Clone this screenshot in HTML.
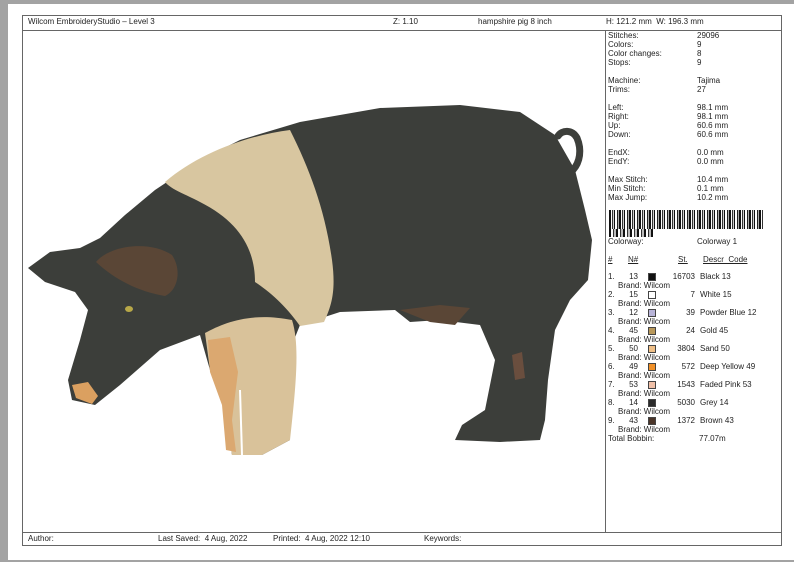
<!DOCTYPE html>
<html><head><meta charset="utf-8"><style>
*{margin:0;padding:0;box-sizing:border-box}
body{width:794px;height:562px;background:#a3a3a3;position:relative;overflow:hidden;font-family:"Liberation Sans",sans-serif;font-size:8px;color:#222}
#page{position:absolute;left:8px;top:4px;width:786px;height:556px;background:#fff}
.box{position:absolute;border:1px solid #777}
.t{position:absolute;white-space:nowrap;line-height:9px}
.sw{position:absolute;width:8px;height:8px;border:1px solid #444}
</style></head><body>
<div id="page"></div>
<div class="box" style="left:22px;top:15px;width:760px;height:531px;border-color:#666"></div>
<div class="box" style="left:22px;top:30px;width:760px;height:1px;border:0;border-top:1px solid #666"></div>
<div class="box" style="left:22px;top:532px;width:760px;height:1px;border:0;border-top:1px solid #666"></div>
<div class="box" style="left:605px;top:30px;width:1px;height:502px;border:0;border-left:1px solid #666"></div>

<div class="t" style="left:28px;top:17px">Wilcom EmbroideryStudio – Level 3</div>
<div class="t" style="left:393px;top:17px">Z: 1.10</div>
<div class="t" style="left:478px;top:17px">hampshire pig 8 inch</div>
<div class="t" style="left:606px;top:17px">H: 121.2 mm &nbsp;W: 196.3 mm</div>

<div class="t" style="left:28px;top:534px">Author:</div>
<div class="t" style="left:158px;top:534px">Last Saved: &nbsp;4 Aug, 2022</div>
<div class="t" style="left:273px;top:534px">Printed: &nbsp;4 Aug, 2022 12:10</div>
<div class="t" style="left:424px;top:534px">Keywords:</div>

<div class="t" style="left:608px;top:31px;line-height:9px">Stitches:<br>Colors:<br>Color changes:<br>Stops:<br><br>Machine:<br>Trims:<br><br>Left:<br>Right:<br>Up:<br>Down:<br><br>EndX:<br>EndY:<br><br>Max Stitch:<br>Min Stitch:<br>Max Jump:</div>
<div class="t" style="left:697px;top:31px;line-height:9px">29096<br>9<br>8<br>9<br><br>Tajima<br>27<br><br>98.1 mm<br>98.1 mm<br>60.6 mm<br>60.6 mm<br><br>0.0 mm<br>0.0 mm<br><br>10.4 mm<br>0.1 mm<br>10.2 mm</div>

<div style="position:absolute;left:609px;top:210px;width:154px;height:19px;background:repeating-linear-gradient(90deg,#111 0 2px,#fff 2px 3px,#333 3px 4px,#ccc 4px 5px,#111 5px 6px,#fff 6px 8px,#222 8px 9px,#aaa 9px 10px)"></div>
<div style="position:absolute;left:609px;top:229px;width:45px;height:8px;background:repeating-linear-gradient(90deg,#111 0 2px,#fff 2px 4px,#333 4px 5px,#bbb 5px 7px)"></div>
<div class="t" style="left:608px;top:237px">Colorway:</div>
<div class="t" style="left:697px;top:237px">Colorway 1</div>

<div class="t" style="left:608px;top:255px;text-decoration:underline">#</div>
<div class="t" style="left:628px;top:255px;text-decoration:underline">N#</div>
<div class="t" style="left:678px;top:255px;text-decoration:underline">St.</div>
<div class="t" style="left:703px;top:255px;text-decoration:underline">Descr&nbsp; Code</div>

<div id="rows"></div>
<div class="t" style="left:608px;top:434px">Total Bobbin:</div>
<div class="t" style="left:699px;top:434px">77.07m</div>

<script>
var d=[["13","#111","16703","Black 13"],["15","#fff","7","White 15"],["12","#b8b4d8","39","Powder Blue 12"],["45","#b8985a","24","Gold 45"],["50","#f0c088","3804","Sand 50"],["49","#f09028","572","Deep Yellow 49"],["53","#f0c0a8","1543","Faded Pink 53"],["14","#2a2a2a","5030","Grey 14"],["43","#4a3428","1372","Brown 43"]];
var h="";
d.forEach(function(r,i){var y=272+i*18;
h+='<div class="t" style="left:608px;top:'+y+'px">'+(i+1)+'.</div>';
h+='<div class="t" style="left:624px;top:'+y+'px;width:14px;text-align:right">'+r[0]+'</div>';
h+='<div class="sw" style="left:648px;top:'+(y+1)+'px;background:'+r[1]+'"></div>';
h+='<div class="t" style="left:660px;top:'+y+'px;width:35px;text-align:right">'+r[2]+'</div>';
h+='<div class="t" style="left:700px;top:'+y+'px">'+r[3]+'</div>';
h+='<div class="t" style="left:618px;top:'+(y+9)+'px">Brand: Wilcom</div>';});
document.getElementById("rows").innerHTML=h;
</script>

<svg style="position:absolute;left:0;top:0" width="794" height="562">
<path d="M558,136 C562,130 572,129 577,138 C582,150 580,162 573,170" stroke="#3d3f3b" stroke-width="7" fill="none" stroke-linecap="round"/>
<path fill="#3c3e3a" d="M28,268 L50,252 L80,248 L100,238 L125,215 L155,190 L200,160 L240,140 L300,122 L380,108 L460,105 L520,112 L555,135 L575,170 L585,210 L592,240 L588,280 L570,300 L555,330 L548,380 L545,420 L540,440 L500,442 L455,440 L462,425 L485,410 L495,360 L480,325 L440,320 L410,322 L395,310 L340,312 L300,325 L290,350 L290,440 L262,455 L232,455 L225,410 L210,370 L200,335 L160,350 L120,385 L95,405 L72,400 L68,380 L80,340 L88,310 L75,292 L45,282 Z"/>
<path fill="#d8c6a0" d="M165,182 C200,152 250,135 290,130 C310,170 325,210 332,260 C336,290 332,305 324,322 L300,326 C285,305 270,292 255,282 C255,250 240,222 200,202 C185,194 172,190 165,182 Z"/>
<path fill="#d9c29a" d="M205,333 C225,322 252,312 292,320 C300,345 296,385 290,440 L262,455 L232,455 L225,410 L210,370 Z"/>
<path fill="#dba870" d="M208,340 L230,337 L238,372 L232,420 L236,452 L226,450 L222,405 L210,372 Z"/>
<path d="M240,390 L242,455" stroke="#fff" stroke-width="2"/>
<path fill="#5a4636" d="M96,262 C110,245 150,240 172,255 C182,270 178,290 165,296 C140,292 115,280 96,262 Z"/>
<path fill="#5a4636" d="M400,310 L440,305 L470,308 L455,325 L430,322 Z"/>
<path fill="#6a4e3e" d="M512,355 L522,352 L525,378 L515,380 Z"/>
<path fill="#dba060" d="M72,385 L88,382 L98,396 L92,404 L76,398 Z"/>
<ellipse cx="129" cy="309" rx="4" ry="3" fill="#b8a848"/>
</svg>
</body></html>
